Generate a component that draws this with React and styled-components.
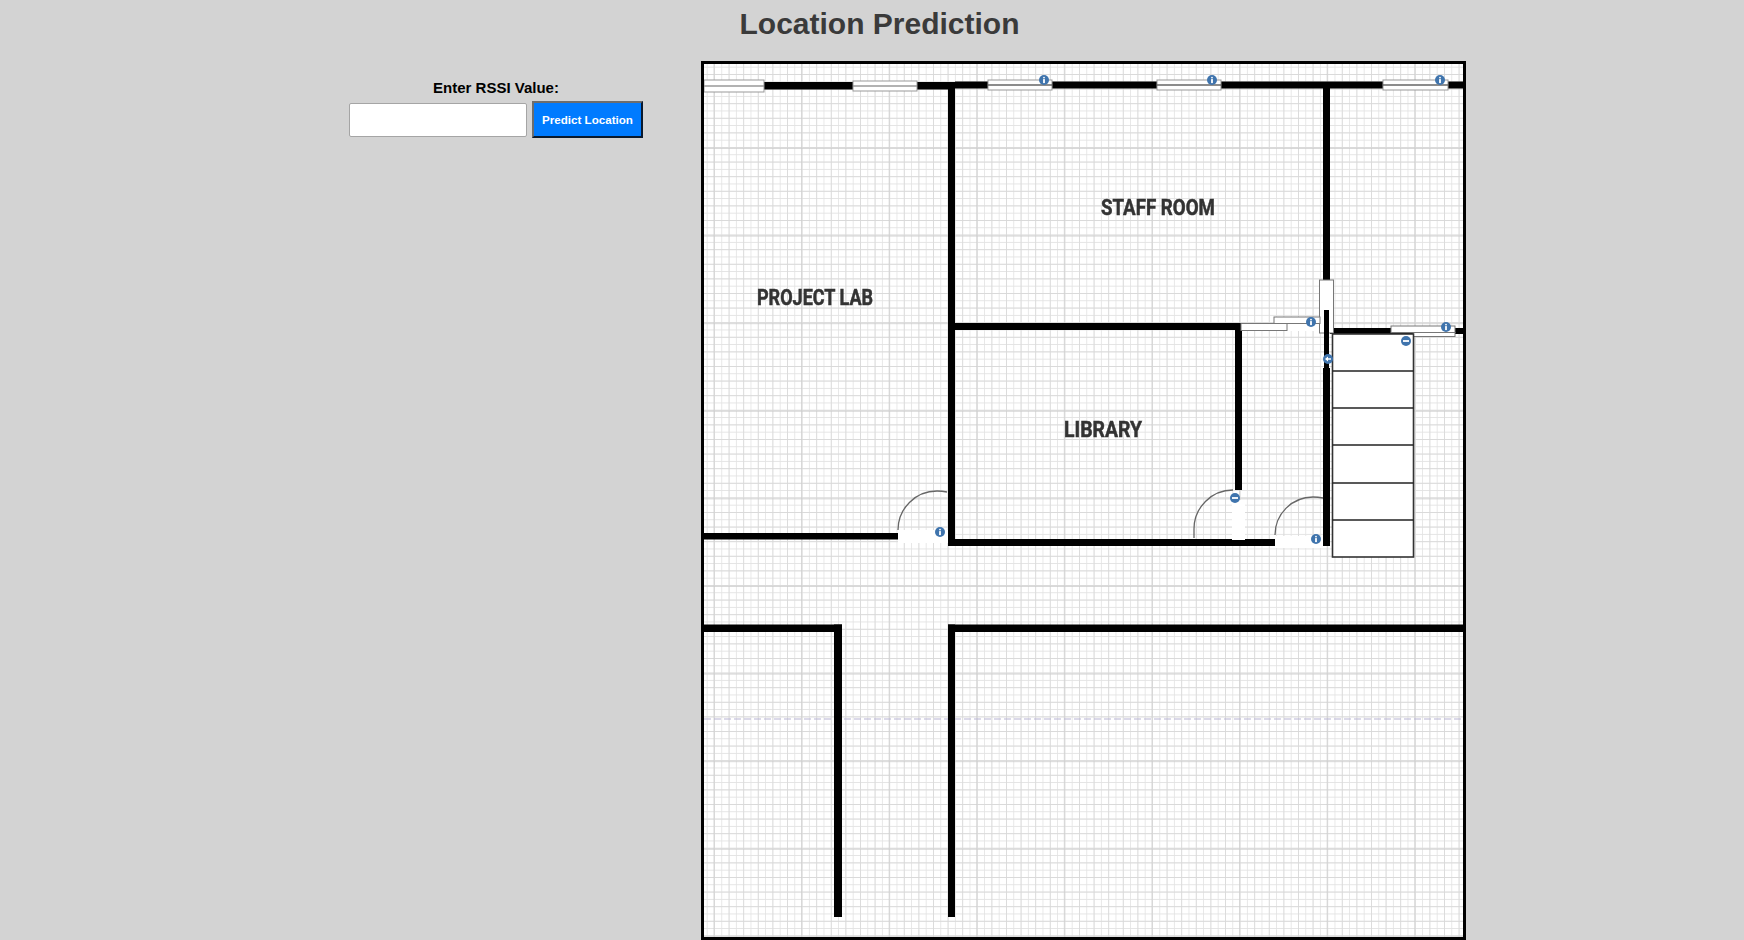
import React from "react";
import styled, { createGlobalStyle } from "styled-components";

// FLOOR PLAN DATA (coordinates are page pixels, the svg viewBox starts at the map's inner corner)
const MAP_X = 704;
const MAP_Y = 64;
const MAP_W = 759;
const MAP_H = 873;

const walls = [
  [704, 82, 251, 7.5],
  [955, 81.5, 508, 7],
  [948, 88, 7, 458],
  [1323, 88, 7, 192],
  [955, 323, 286, 7],
  [1235, 323, 7, 167],
  [948, 539, 327, 7],
  [704, 533, 194, 6.5],
  [1324, 310, 5, 58],
  [1323, 368, 7, 178],
  [1330, 328, 133, 6],
  [948, 624.5, 515, 7.5],
  [704, 624.5, 138, 7.5],
  [948, 624.5, 7, 292.5],
  [834, 624.5, 8, 292.5],
];

const windows = [
  [704, 80, 60, 12, "#999"],
  [853, 81, 64, 10, "#999"],
  [988, 80, 64, 10, "#666"],
  [1157, 80, 64, 10, "#666"],
  [1383, 80, 65, 10, "#666"],
];

const openings = [
  [898, 530, 50, 13],
  [1275, 536, 48, 12],
  [1232, 500, 13, 40],
  [1287, 323, 36, 8],
];

const panels = [
  [1274, 317, 46, 6.5],
  [1241, 323.5, 46, 7],
  [1391, 326, 64, 6.5],
  [1413, 332.5, 42, 4],
];

const arcs = [
  "M947 492 Q942 491 937 491 A39 39 0 0 0 898 530",
  "M1233 490 A39 39 0 0 0 1194 529 V538",
  "M1323 498 Q1318 497 1313 497 A38 38 0 0 0 1275 535",
];

const steps = [371, 408, 445, 483, 520];

const markers = [
  [1044, 80, "info"],
  [1212, 80, "info"],
  [1440, 80, "info"],
  [940, 532, "info"],
  [1311, 322, "info"],
  [1446, 327, "info"],
  [1316, 539, "info"],
  [1406, 341, "minus"],
  [1235, 498, "minus"],
  [1328, 359, "arrow"],
];

const rooms = [
  ["PROJECT LAB", 757, 305, 116],
  ["STAFF ROOM", 1101, 215, 114],
  ["LIBRARY", 1064, 436.5, 78],
];

function Marker({ x, y, kind }) {
  return (
    <g transform={`translate(${x} ${y})`}>
      <circle r="5" fill="#3f74ad" />
      {kind === "info" && (
        <>
          <circle cy="-2.4" r="0.9" fill="#fff" />
          <rect x="-0.9" y="-0.9" width="1.8" height="4" fill="#fff" />
        </>
      )}
      {kind === "minus" && <rect x="-3" y="-0.9" width="6" height="1.8" fill="#fff" />}
      {kind === "arrow" && <path d="M-3 0 L0 -2.4 V-0.8 H3 V0.8 H0 V2.4 Z" fill="#fff" />}
    </g>
  );
}

function FloorPlan() {
  return (
    <PlanSvg
      viewBox={`${MAP_X} ${MAP_Y} ${MAP_W} ${MAP_H}`}
      width={MAP_W}
      height={MAP_H}
    >
      <defs>
        <pattern id="minor" x="706.7" y="66.7" width="7.3" height="7.3" patternUnits="userSpaceOnUse">
          <path d="M0 0 V7.3 M0 0 H7.3" stroke="#e3e3e3" strokeWidth="1.6" fill="none" />
        </pattern>
        <pattern id="medium" x="714" y="74" width="14.6" height="14.6" patternUnits="userSpaceOnUse">
          <path d="M0 0 V14.6 M0 0 H14.6" stroke="#d8d8d8" strokeWidth="1.4" fill="none" />
        </pattern>
        <pattern id="major" x="801" y="148" width="87.6" height="87.6" patternUnits="userSpaceOnUse">
          <path d="M0 0 V87.6 M0 0 H87.6" stroke="#cdcdcd" strokeWidth="1.3" fill="none" />
        </pattern>
      </defs>
      <rect x={MAP_X} y={MAP_Y} width={MAP_W} height={MAP_H} fill="#fff" />
      <rect x={MAP_X} y={MAP_Y} width={MAP_W} height={MAP_H} fill="url(#minor)" />
      <rect x={MAP_X} y={MAP_Y} width={MAP_W} height={MAP_H} fill="url(#medium)" />
      <rect x={MAP_X} y={MAP_Y} width={MAP_W} height={MAP_H} fill="url(#major)" />
      <path d="M704 719 H1463" stroke="#b7b3d4" strokeWidth="1.2" strokeDasharray="7 3" />

      {walls.map(([x, y, w, h], i) => (
        <rect key={i} x={x} y={y} width={w} height={h} fill="#000" />
      ))}

      {openings.map(([x, y, w, h], i) => (
        <rect key={i} x={x} y={y} width={w} height={h} fill="#fff" />
      ))}

      {arcs.map((d, i) => (
        <path key={i} d={d} fill="none" stroke="#666" strokeWidth="1.3" />
      ))}

      {windows.map(([x, y, w, h, line], i) => (
        <g key={i}>
          <rect x={x} y={y} width={w} height={h} fill="#fff" stroke="#999" strokeWidth="1" />
          <path d={`M${x} ${y + h / 2} H${x + w}`} stroke={line} strokeWidth="1.4" />
        </g>
      ))}

      <rect x="1319.5" y="280" width="14" height="53" fill="#fff" stroke="#777" strokeWidth="1" />
      <rect x="1324" y="310" width="5" height="58" fill="#000" />

      {panels.map(([x, y, w, h], i) => (
        <rect key={i} x={x} y={y} width={w} height={h} fill="#fff" stroke="#777" strokeWidth="1" />
      ))}

      <rect x="1332.5" y="334" width="81" height="223" fill="#fff" stroke="#333" strokeWidth="1.6" />
      {steps.map((y) => (
        <path key={y} d={`M1332.5 ${y} H1413.5`} stroke="#222" strokeWidth="1.5" />
      ))}

      {markers.map(([x, y, kind], i) => (
        <Marker key={i} x={x} y={y} kind={kind} />
      ))}

      {rooms.map(([name, x, y, w]) => (
        <RoomName key={name} x={x} y={y} textLength={w} lengthAdjust="spacingAndGlyphs">
          {name}
        </RoomName>
      ))}
    </PlanSvg>
  );
}

function App() {
  return (
    <Page>
      <GlobalStyle />
      <Title>Location Prediction</Title>
      <Content>
        <Form>
          <Label htmlFor="rssi">Enter RSSI Value:</Label>
          <Controls>
            <RssiInput id="rssi" type="text" />
            <PredictButton type="button">Predict Location</PredictButton>
          </Controls>
        </Form>
        <MapFrame>
          <FloorPlan />
        </MapFrame>
      </Content>
    </Page>
  );
}

const GlobalStyle = createGlobalStyle`
  html,
  body {
    margin: 0;
    padding: 0;
    background: #d3d3d3;
    font-family: "Liberation Sans", Arial, sans-serif;
  }
`;

const Page = styled.div`
  width: 100%;
  height: 940px;
  overflow: hidden;
  background: #d3d3d3;
`;

const Title = styled.h1`
  margin: 0;
  height: 61px;
  padding: 6px 0 0 15px;
  box-sizing: border-box;
  text-align: center;
  font-size: 30px;
  line-height: 35px;
  font-weight: 700;
  color: #3a3a3a;
`;

const Content = styled.div`
  display: flex;
  align-items: flex-start;
  gap: 58px;
  padding-left: 349px;
`;

const Form = styled.div`
  width: 294px;
  padding-top: 18px;
  display: flex;
  flex-direction: column;
  align-items: center;
`;

const Label = styled.label`
  font-size: 15px;
  line-height: 17px;
  font-weight: 700;
  color: #000;
  margin-bottom: 5px;
`;

const Controls = styled.div`
  display: flex;
  align-items: center;
  gap: 5px;
`;

const RssiInput = styled.input`
  width: 178px;
  height: 34px;
  box-sizing: border-box;
  padding: 0 6px;
  background: #fff;
  border: 1px solid #a5a5a5;
  border-radius: 2px;
`;

const PredictButton = styled.button`
  width: 111px;
  height: 37px;
  padding: 0;
  box-sizing: border-box;
  background: #007bff;
  border: 2px solid;
  border-color: #6d6d6d #0a1a2e #0a1a2e #6d6d6d;
  color: #fff;
  font-family: "Liberation Sans", Arial, sans-serif;
  font-size: 11.6px;
  font-weight: 700;
`;

const MapFrame = styled.div`
  width: 765px;
  height: 879px;
  box-sizing: border-box;
  border: 3px solid #000;
  background: #fff;
  flex: none;
`;

const PlanSvg = styled.svg`
  display: block;
  filter: blur(0.45px);
`;

const RoomName = styled.text`
  font-family: "Liberation Sans Narrow", Roboto, "Liberation Sans", sans-serif;
  font-size: 22px;
  font-weight: 700;
  fill: #333;
  stroke: #333;
  stroke-width: 0.5px;
`;

export default App;
